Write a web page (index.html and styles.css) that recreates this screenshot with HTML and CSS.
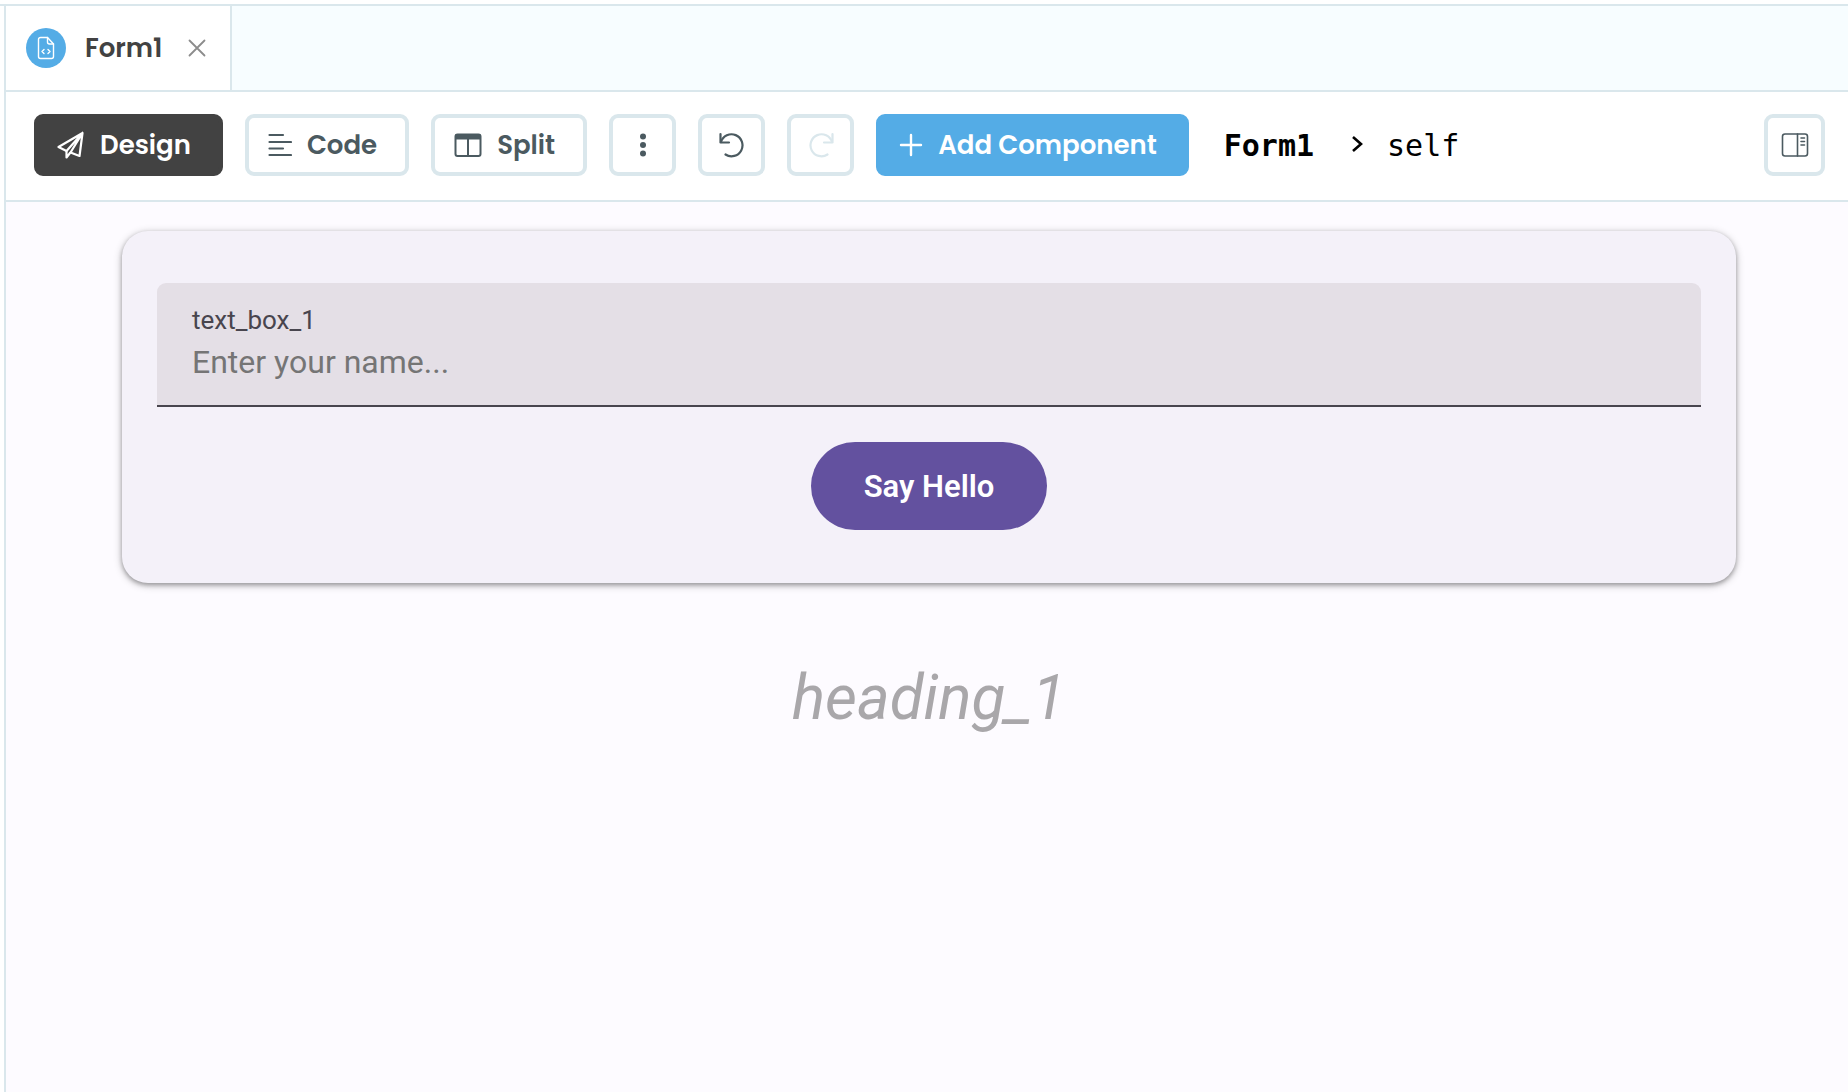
FILE: index.html
```html
<!DOCTYPE html>
<html lang="en">
<head>
  <meta charset="UTF-8" />
  <meta name="viewport" content="width=device-width, initial-scale=1.0" />
  <title>Form1</title>
  <link rel="stylesheet" href="styles.css">
</head>
<body>

<div class="editor">

  <!-- Tabs -->
  <nav class="tabs">
    <div class="tab">
      <a href="#form1" class="tab-link">
        <span class="tab-icon">
          <svg width="18" height="24" viewBox="0 0 18 24" fill="none" stroke="currentColor" stroke-width="1.4" stroke-linecap="round" stroke-linejoin="round">
            <path d="M10.5 1.5H3.5a2 2 0 0 0-2 2v17a2 2 0 0 0 2 2h11a2 2 0 0 0 2-2V8z"/>
            <path d="M10.5 1.5V6a2 2 0 0 0 2 2h4"/>
            <path d="M7 13.5l-2 2 2 2M11 13.5l2 2-2 2"/>
          </svg>
        </span>
        Form1
      </a>
      <button class="tab-close" aria-label="Close">
        <svg width="18" height="18" viewBox="0 0 18 18" stroke="currentColor" stroke-width="1.8" stroke-linecap="round">
          <path d="M1.5 1.5l15 15M16.5 1.5l-15 15"/>
        </svg>
      </button>
    </div>
  </nav>

  <!-- Toolbar -->
  <div class="toolbar">
    <button class="btn btn-dark">
      <svg width="28" height="28" viewBox="0 0 28 28" fill="none" stroke="currentColor" stroke-width="2.2" stroke-linecap="round" stroke-linejoin="round">
        <path d="M25.5 2L1.500 16l8 4L25.500 2l-3 23-9-3.500L25.500 2"/>
        <path d="M9.500 20v6.500l3.500-4.500"/>
      </svg>
      Design
    </button>
    <button class="btn">
      <svg width="24" height="24" viewBox="0 0 24 24" stroke="currentColor" stroke-width="2.200" stroke-linecap="round">
        <path d="M1.500 2H15M1.500 9H23M1.500 15.500H15M1.500 22H23"/>
      </svg>
      Code
    </button>
    <button class="btn">
      <svg width="28" height="24" viewBox="0 0 28 24" fill="none" stroke="currentColor" stroke-width="2">
        <rect x="1.500" y="1.500" width="25" height="21.500" rx="2"/>
        <path d="M14 6v17"/>
        <path d="M1.500 4h25" stroke-width="5"/>
      </svg>
      Split
    </button>
    <button class="btn btn-icon" aria-label="More">
      <svg width="24" height="24" viewBox="0 0 24 24" fill="currentColor">
        <circle cx="12" cy="3.500" r="3"/>
        <circle cx="12" cy="12" r="3"/>
        <circle cx="12" cy="20.500" r="3"/>
      </svg>
    </button>
    <button class="btn btn-icon" aria-label="Undo">
      <svg width="26" height="26" viewBox="0 0 26 26" fill="none" stroke="currentColor" stroke-width="2.200" stroke-linecap="round" stroke-linejoin="round">
        <path d="M1.500 2v8.500H10"/>
        <path d="M2 10A11 11 0 1 1 6.500 22.500"/>
      </svg>
    </button>
    <button class="btn btn-icon" aria-label="Redo" disabled>
      <svg width="26" height="26" viewBox="0 0 26 26" fill="none" stroke="currentColor" stroke-width="2.200" stroke-linecap="round" stroke-linejoin="round">
        <path d="M24.500 2v8.500H16"/>
        <path d="M24 10A11 11 0 1 0 19.500 22.500"/>
      </svg>
    </button>
    <button class="btn btn-blue">
      <svg width="24" height="24" viewBox="0 0 24 24" stroke="currentColor" stroke-width="2.400" stroke-linecap="round">
        <path d="M12 2v20M2 12h20"/>
      </svg>
      Add Component
    </button>
    <div class="path">
      <strong>Form1</strong>
      <svg width="14" height="18" viewBox="0 0 14 18" fill="none" stroke="currentColor" stroke-width="2.600">
        <path d="M2 1l8 7-8 7"/>
      </svg>
      <span>self</span>
    </div>
    <button class="btn btn-panel" aria-label="Toggle panel">
      <svg width="28" height="24" viewBox="0 0 28 24" fill="none" stroke="currentColor" stroke-width="1.600" stroke-linecap="round">
        <rect x="1.500" y="1" width="25" height="22" rx="2.500"/>
        <path d="M16.500 1v22M20 5h3.500M20 8.500h3.500M20 12h3.500"/>
      </svg>
    </button>
  </div>

  <!-- Canvas -->
  <main class="canvas">
    <div class="card">
      <div class="field">
        <label for="text_box_1">text_box_1</label>
        <input id="text_box_1" type="text" placeholder="Enter your name...">
      </div>
      <button class="say-hello">Say Hello</button>
    </div>
    <h1>heading_1</h1>
  </main>

</div>

</body>
</html>
```
FILE: styles.css
```css
* { margin: 0; padding: 0; box-sizing: border-box; }
body {
  background: #fff;
  font-family: Roboto, sans-serif;
  padding-top: 4px;
}
button {
  border: none;
  background: none;
  cursor: pointer;
}
svg {
  display: block;
  flex: none;
}
.editor {
  display: flex;
  flex-direction: column;
  min-height: calc(100vh - 4px);
  border-top: 2px solid #dae7ec;
  padding-left: 4px;
}
.tabs, .toolbar, .canvas {
  border-left: 2px solid #dae7ec;
}

/* tabs */
.tabs {
  display: flex;
  background: #f7fdff;
  border-bottom: 2px solid #dae7ec;
}
.tab {
  display: flex;
  align-items: center;
  gap: 25px;
  height: 84px;
  padding: 0 24px 0 20px;
  background: #fff;
  border-right: 2px solid #dae7ec;
}
.tab-link {
  display: flex;
  align-items: center;
  gap: 19px;
  color: #424242;
  font: 600 26px Poppins, Inter, sans-serif;
  text-decoration: none;
}
.tab-icon {
  display: flex;
  align-items: center;
  justify-content: center;
  width: 40px;
  height: 40px;
  border-radius: 50%;
  background: #54ace6;
  color: #fff;
}
.tab-close {
  color: #8c8c8c;
}

/* toolbar */
.toolbar {
  display: flex;
  align-items: center;
  gap: 22px;
  padding: 22px 23px 24px 28px;
  border-bottom: 2px solid #dae7ec;
}
.btn {
  display: flex;
  align-items: center;
  gap: 15px;
  height: 62px;
  padding: 0 28px 0 19px;
  border: 4px solid #dae7ec;
  border-radius: 9px;
  background: #fff;
  color: #4b5a60;
  font: 600 26px Poppins, Inter, sans-serif;
  white-space: nowrap;
}
.btn-dark {
  border-color: #424242;
  background: #424242;
  color: #fff;
}
.btn-blue {
  border-color: #54ace6;
  background: #54ace6;
  color: #fff;
}
.btn-icon, .btn-panel {
  justify-content: center;
  width: 67px;
  padding: 0;
}
.btn-panel {
  width: 61px;
  margin-left: auto;
}
.btn:disabled {
  color: #dae7ec;
}
.path {
  display: flex;
  align-items: center;
  gap: 37px;
  padding-left: 13px;
  color: #000;
  font: 30px "DejaVu Sans Mono", monospace;
}
.path span {
  margin-left: -15px;
}

/* canvas */
.canvas {
  flex: 1;
  padding: 29px 112px 0 116px;
  background: #fdfbff;
}
.card {
  display: flex;
  flex-direction: column;
  align-items: center;
  gap: 35px;
  padding: 52px 35px 53px;
  border-radius: 26px;
  background: #f4f1f9;
  box-shadow: 0 2px 4px rgba(0,0,0,0.3), 0 2px 7px 2px rgba(0,0,0,0.15);
}
.field {
  display: flex;
  flex-direction: column;
  gap: 4px;
  width: 100%;
  height: 124px;
  padding: 19px 35px 0;
  border-bottom: 2px solid #48454e;
  border-radius: 9px 9px 0 0;
  background: #e4dfe6;
}
.field label {
  color: #48454e;
  font-size: 26px;
  line-height: 36px;
}
.field input {
  width: 100%;
  border: none;
  outline: none;
  background: none;
  font: 32px/40px Roboto, sans-serif;
}
.field input::placeholder {
  color: #757575;
}
.say-hello {
  height: 88px;
  padding: 0 53px;
  border-radius: 44px;
  background: #63519f;
  color: #fff;
  font: 600 31px Roboto, sans-serif;
}
h1 {
  margin-top: 75px;
  color: #a9a7aa;
  font-size: 62px;
  font-style: italic;
  font-weight: 400;
  line-height: 80px;
  text-align: center;
}
```
